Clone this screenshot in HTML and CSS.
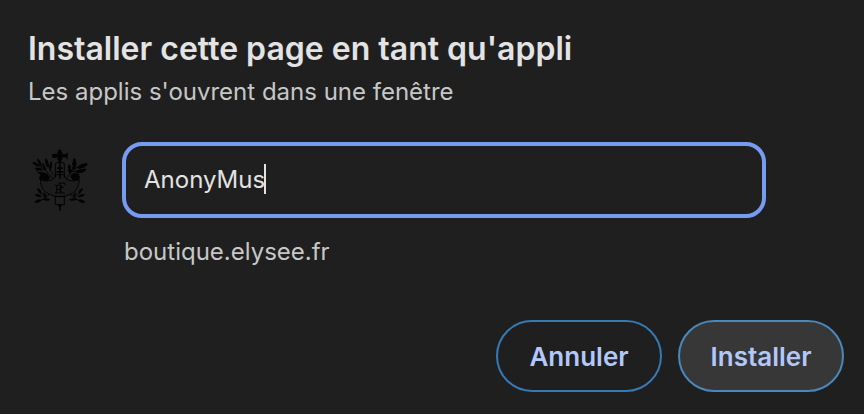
FILE: index.html
```html
<!DOCTYPE html>
<html lang="fr">
<head>
<meta charset="utf-8">
<meta name="viewport" content="width=device-width, initial-scale=1">
<title>Installer cette page en tant qu'appli</title>
<link rel="stylesheet" href="styles.css">
</head>
<body>
<main class="dialog">
  <header class="heading">
    <h1 class="title">Installer cette page en tant qu'appli</h1>
    <p class="subtitle">Les applis s'ouvrent dans une fenêtre</p>
  </header>
  <form class="form">
    <div class="app">
      <svg class="emblem" viewBox="24 24 168 192" aria-hidden="true">
        <g>
          <path d="M89 120C74 98 56 82 31 66M72 113C52 106 42 98 37 88M88 105C77 88 71 74 68 60" class="line"/>
          <path d="M24 68q14-3 25 11q-15 1-25-11zM39 55q14 7 14 25q-13-9-14-25zM64 54q13 9 8 29q-12-12-8-29zM82 62q7 15-5 31q-5-17 5-31zM55 68q12 8 11 26q-12-10-11-26zM31 84q15-4 27 6q-14 6-27-6zM40 97q16-4 29 5q-16 7-29-5z"/>
          <path d="M46 112q4-12 16-8q8-6 12 3q7 5 1 11q-6 8-15 7q-8 4-11-4q-6-3-3-9z"/>
          <path d="M36 188C53 182 67 172 78 161M43 148C49 158 55 167 66 173" class="line"/>
          <path d="M39 145q12 0 15 17q-13-3-15-17zM32 164q13-6 22 7q-14 3-22-7zM31 187q10-13 22-8q-7 12-22 8zM54 177q13-5 26 2q-13 7-26-2zM58 157q10 4 9 15q-10-4-9-15z"/>
        </g>
        <g>
          <path d="M126 120C136 99 157 78 181 72M137 104C144 90 151 77 153 61M146 96C164 91 174 88 184 89" class="line"/>
          <path d="M150 54q9 5 5 13q7 4 0 10q2 9-8 12q-5-7 0-12q-6-6 0-11q-3-6 3-12zM191 72q-7-6-12 0q-8-3-11 5q-7 1-8 8q9 4 13-2q8 3 11-4q7 0 7-7zM187 88q-7-5-11 0q-7-3-12 3q-7 0-9 6q8 5 14 1q6 3 10-3q7 0 8-7zM135 73q8 5 5 12q5 8-3 15q-8-7-3-13q-5-7 1-14z"/>
          <path d="M142 104q6-8 14-4q9-1 10 7q5 6-2 11q-4 8-12 4q-9 1-9-7q-6-4-1-11z"/>
          <path d="M178 188C161 182 148 172 137 161M173 148C167 158 160 167 150 173" class="line"/>
          <path d="M177 145q-12 0-15 17q13-3 15-17zM183 164q-13-6-22 7q14 3 22-7zM184 187q-10-13-22-8q7 12 22 8zM160 177q-13-5-26 2q13 7 26-2zM156 157q-10 4-9 15q10-4 9-15z"/>
        </g>
        <path class="shield" d="M49 119Q70 127 86 119Q94 111 94 104H121Q121 111 129 119Q145 127 166 119Q164 148 146 159Q129 170 107 170Q85 170 69 159Q50 148 49 119z"/>
        <path class="line" d="M94 113V70Q107 62 121 70V113"/>
        <path d="M102 29h10v9h-10zM84 43q8-4 16 0V37h15v6h9l7-6v22l-7-7h-9v7h-15v-7q-8 4-16 0zM103 54h9v17h-9zM105 73h5v9h6v5h-6v6h8v5h-8v18h-5V98h-8v-5h8v-6h-6v-5h6z"/>
        <path class="line" d="M93 170H121V194H94V170"/>
        <path d="M102 195h12l-4 7v10h-5v-10z"/>
        <g class="cipher">
          <path d="M92 136h14q8 0 8 6t-8 6H97M98 136v22M93 158h10M105 148l11 11h7"/>
          <path d="M103 129h20v7M109 129v30M109 142h10M104 159h10"/>
        </g>
      </svg>
      <div class="field">
        <input class="name" type="text" value="AnonyMus" aria-label="Nom de l'appli" spellcheck="false" autocomplete="off">
        <span class="caret"></span>
      </div>
      <p class="origin">boutique.elysee.fr</p>
    </div>
    <div class="actions">
      <button class="button" type="button">Annuler</button>
      <button class="button primary" type="button">Installer</button>
    </div>
  </form>
</main>
</body>
</html>
```
FILE: styles.css
```css
* {
  box-sizing: border-box;
}

body {
  margin: 0;
  background: #1f1f1f;
  color: #e3e3e3;
  font-family: Inter, "Liberation Sans", sans-serif;
  font-size: 24px;
  font-variant-ligatures: none;
  line-height: 32px;
}

.dialog {
  padding: 28px 20px 22px 28px;
}

.title,
.subtitle,
.origin {
  margin: 0;
}

.title {
  font-size: 32px;
  font-weight: 600;
  line-height: 42px;
}

.subtitle {
  margin-top: 6px;
}

.subtitle,
.origin {
  color: #c7c7c7;
}

.app {
  display: grid;
  grid-template-columns: 64px minmax(0, 1fr);
  column-gap: 30px;
  align-items: center;
  margin: 34px 78px 0 0;
}

.emblem {
  width: 56px;
  height: 64px;
  margin-left: 4px;
  fill: #030303;
}

.line,
.shield,
.cipher {
  fill: none;
  stroke: #030303;
  stroke-width: 3;
}

.shield {
  fill: #1c1c1c;
}

.field {
  position: relative;
}

.name {
  display: block;
  width: 100%;
  height: 76px;
  padding: 0 18px 2px;
  border: 4px solid #759cf0;
  border-radius: 20px;
  outline: none;
  background: transparent;
  color: inherit;
  font: inherit;
}

.caret {
  position: absolute;
  top: 22px;
  left: 142px;
  width: 2px;
  height: 30px;
  background: #e3e3e3;
}

.origin {
  grid-column: 2;
  margin: 18px 0 0 2px;
}

.actions {
  display: flex;
  justify-content: flex-end;
  gap: 16px;
  margin-top: 52px;
}

.button {
  min-width: 166px;
  height: 72px;
  padding: 2px 30px 0;
  border: 2px solid #357ab5;
  border-radius: 36px;
  background: transparent;
  color: #b3c8fa;
  font: inherit;
  font-size: 26px;
  font-weight: 600;
}

.primary {
  border-color: #4888bd;
  background: #373737;
}
```
